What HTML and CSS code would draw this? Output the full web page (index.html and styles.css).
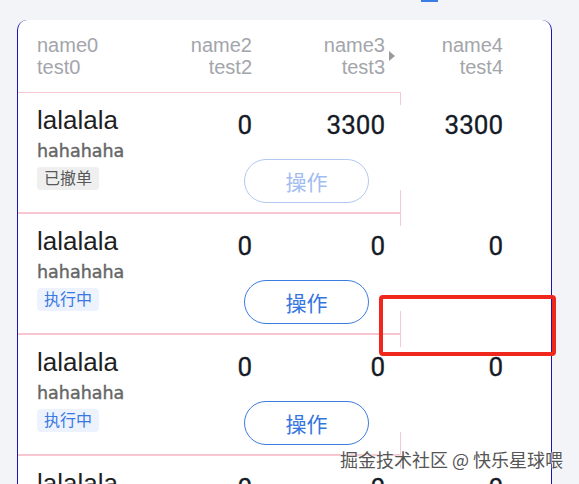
FILE: index.html
```
<!DOCTYPE html>
<html>
<head>
    <title>列表</title>
    <link rel="stylesheet" href="styles.css">
</head>
<body>
    <div class="tab-line"></div>
    <div class="card">
        <div class="table-head">
            <div class="head-cell">name0<br>test0</div>
            <div class="head-cell right">name2<br>test2</div>
            <div class="head-cell right sortable">name3<br>test3</div>
            <div class="head-cell right">name4<br>test4</div>
        </div>
        <div class="sep sep-head"></div>

        <div class="row">
            <div class="title">lalalala</div>
            <div class="num">0</div>
            <div class="num">3300</div>
            <div class="num">3300</div>
            <div class="meta">
                <div class="sub">hahahaha</div>
                <div class="tag tag-gray">已撤单</div>
            </div>
            <button class="op-btn" disabled>操作</button>
        </div>
        <div class="sep"></div>

        <div class="row">
            <div class="title">lalalala</div>
            <div class="num">0</div>
            <div class="num">0</div>
            <div class="num">0</div>
            <div class="meta">
                <div class="sub">hahahaha</div>
                <div class="tag tag-blue">执行中</div>
            </div>
            <button class="op-btn">操作</button>
        </div>
        <div class="sep"></div>

        <div class="row">
            <div class="title">lalalala</div>
            <div class="num">0</div>
            <div class="num">0</div>
            <div class="num">0</div>
            <div class="meta">
                <div class="sub">hahahaha</div>
                <div class="tag tag-blue">执行中</div>
            </div>
            <button class="op-btn">操作</button>
        </div>
        <div class="sep"></div>

        <div class="row">
            <div class="title">lalalala</div>
            <div class="num">0</div>
            <div class="num">0</div>
            <div class="num">0</div>
            <div class="meta">
                <div class="sub">hahahaha</div>
                <div class="tag tag-blue">执行中</div>
            </div>
            <button class="op-btn">操作</button>
        </div>
    </div>

    <div class="mark-box"></div>
    <div class="watermark">掘金技术社区 @ 快乐星球喂</div>
</body>
</html>
```

FILE: styles.css
```
body {
    margin: 0;
    height: 484px;
    overflow: hidden;
    position: relative;
    background: #f3f4f8;
    font-family: 'Liberation Sans', 'Noto Sans CJK SC', sans-serif;
}
.tab-line {
    width: 17px;
    height: 2px;
    margin-left: 421px;
    background: #3b7de4;
}
.card {
    width: 533px;
    margin: 18px 0 0 17px;
    background: #fff;
    border-left: 1px solid #1c14b4;
    border-right: 1px solid #1c14b4;
    border-radius: 10px 10px 0 0;
    min-height: 600px;
}
.table-head,
.row {
    display: grid;
    grid-template-columns: 103px 112px 133px 118px;
    padding: 0 48px 0 19px;
}
.table-head {
    padding-top: 14px;
    padding-bottom: 14px;
}
.head-cell {
    font-size: 20px;
    line-height: 22px;
    color: #a3a5ab;
}
.head-cell.right {
    text-align: right;
}
.sortable {
    position: relative;
}
.sortable::after {
    content: '';
    position: absolute;
    right: -10px;
    top: 50%;
    margin-top: -5px;
    border-left: 6px solid #9a9a9a;
    border-top: 5px solid transparent;
    border-bottom: 5px solid transparent;
}
.sep {
    position: relative;
    width: 382px;
    height: 2px;
    background: #f7c6d1;
}
.sep::before {
    content: '';
    position: absolute;
    left: 382px;
    top: -22px;
    width: 1px;
    height: 36px;
    background: #f4cbd4;
}
.sep-head {
    height: 1px;
    background: #f3c9d2;
}
.sep-head::before {
    top: 0;
    height: 13px;
}
.row {
    padding-top: 12px;
    padding-bottom: 9px;
    align-items: start;
}
.title {
    font-size: 26px;
    line-height: 30px;
    color: #1f1f1f;
}
.num {
    margin-top: 5px;
    text-align: right;
    font-family: Roboto, sans-serif;
    font-size: 26px;
    line-height: 30px;
    color: #151a26;
    -webkit-text-stroke: 0.3px #151a26;
}
.sub {
    font-family: 'DejaVu Sans', sans-serif;
    font-size: 17.5px;
    line-height: 22px;
    color: #666;
    -webkit-text-stroke: 0.4px #666;
}
.tag {
    width: fit-content;
    margin-top: 5px;
    padding: 0 7px;
    border-radius: 4px;
    font-size: 16px;
    line-height: 23px;
}
.tag-gray {
    background: #efefef;
    color: #585858;
}
.tag-blue {
    background: #edf3fe;
    color: #3a78e0;
}
.op-btn {
    grid-column: 2 / 4;
    justify-self: start;
    margin: 19px 0 0 104px;
    width: 125px;
    height: 44px;
    border: 1px solid #3d7ce0;
    border-radius: 22px;
    background: #fff;
    color: #3575e0;
    font-family: 'Noto Sans CJK SC', sans-serif;
    font-size: 21px;
    padding: 0;
}
.op-btn:disabled {
    border-color: #b3c8f2;
    color: #a2bcef;
}
.mark-box {
    position: absolute;
    left: 379px;
    top: 295px;
    width: 169px;
    height: 53px;
    border: 4px solid #f0271c;
    border-radius: 4px;
}
.watermark {
    position: absolute;
    left: 340px;
    top: 446px;
    font-family: 'Noto Sans CJK SC', sans-serif;
    font-size: 18px;
    color: #555;
    text-shadow: 0 0 2px #fff, 0 0 2px #fff;
}
```
